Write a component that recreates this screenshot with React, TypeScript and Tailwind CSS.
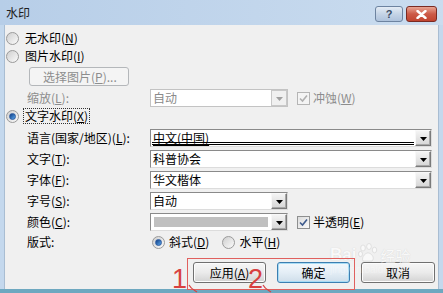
import React from "react";

function Radio({ checked }: { checked?: boolean }) {
  return (
    <span className="w-[13px] h-[13px] rounded-full border border-[#9a9a9a] bg-linear-to-br from-[#cfcfcf] to-[#fbfbfb] flex items-center justify-center shrink-0">
      {checked && (
        <span className="w-[7px] h-[7px] rounded-full bg-linear-to-br from-[#0f3d85] to-[#5ea9ec] border border-[#2b5aa0]" />
      )}
    </span>
  );
}

function Check({ disabled }: { disabled?: boolean }) {
  return (
    <span
      className={
        "w-[13px] h-[13px] border flex items-center justify-center shrink-0 " +
        (disabled
          ? "border-[#b5b5b5] bg-[#f4f4f4]"
          : "border-[#8e8f8f] bg-linear-to-br from-[#dcdcdc] to-[#fafafa]")
      }
    >
      <svg width="9" height="9" viewBox="0 0 9 9">
        <path
          d="M1 4.5 L3.5 7 L8 1.5"
          fill="none"
          stroke={disabled ? "#b0b0b0" : "#3d5a8c"}
          strokeWidth="1.6"
        />
      </svg>
    </span>
  );
}

function DropBtn({ disabled }: { disabled?: boolean }) {
  return (
    <span
      className={
        "w-[16px] h-[16px] shrink-0 flex items-center justify-center border " +
        (disabled
          ? "border-[#c8c8c8] bg-[#f0f0f0]"
          : "border-t-[#f8f8f8] border-l-[#f8f8f8] border-r-[#7a7a7a] border-b-[#7a7a7a] bg-linear-to-b from-[#f4f4f4] to-[#d6d6d6] shadow-[inset_-1px_-1px_0_#a8a8a8]")
      }
    >
      <svg width="7" height="4" viewBox="0 0 7 4" className="mt-[2px]">
        <path d="M0 0 H7 L3.5 4 Z" fill={disabled ? "#a0a0a0" : "#000"} />
      </svg>
    </span>
  );
}

function Combo({
  w,
  text,
  disabled,
  focused,
  swatch,
}: {
  w: string;
  text?: string;
  disabled?: boolean;
  focused?: boolean;
  swatch?: boolean;
}) {
  return (
    <div
      className={
        "h-[18px] flex items-stretch border bg-white " +
        w +
        (disabled
          ? " border-[#c3c3c3] text-[#8a8a8a]"
          : " border-t-[#8a8a8a] border-l-[#8a8a8a] border-r-[#dcdcdc] border-b-[#dcdcdc]")
      }
    >
      <div className="flex-1 flex items-center pl-[2px] relative">
        {swatch && <div className="absolute left-[3px] right-[3px] top-[3px] bottom-[3px] bg-[#c0c0c0]" />}
        {text && (
          <span className={"leading-none " + (focused ? "underline underline-offset-[2px]" : "")}>{text}</span>
        )}
        {focused && (
          <div className="absolute left-[1px] right-[1px] bottom-[1px] h-[3px] border-t border-b border-black" />
        )}
      </div>
      <div className="flex items-center">
        <DropBtn disabled={disabled} />
      </div>
    </div>
  );
}

function Label({ children }: { children: React.ReactNode }) {
  return <div className="w-[123px] ml-[21px] shrink-0 leading-none">{children}</div>;
}

function Btn({
  children,
  w,
  def,
}: {
  children: React.ReactNode;
  w: string;
  def?: boolean;
}) {
  return (
    <div
      className={
        "h-[21px] rounded-[3px] border flex items-center justify-center leading-none " +
        w +
        (def
          ? " border-[#3c7fb1] bg-linear-to-b from-[#f3f8fc] via-[#e4eef6] to-[#cfdeea] shadow-[inset_0_0_0_1px_#a8dcf5]"
          : " border-[#707070] bg-linear-to-b from-[#f6f6f6] via-[#ebebeb] to-[#d3d3d3] shadow-[inset_0_0_0_1px_#fcfcfc]")
      }
    >
      {children}
    </div>
  );
}

export default function App() {
  return (
    <div className="w-[443px] h-[293px] overflow-hidden relative bg-[#c4d8ed] flex flex-col font-['Noto_Sans_CJK_SC',sans-serif] text-[12px] text-black">
      {/* title bar */}
      <div className="h-[25px] shrink-0 flex items-center justify-between pl-[6px] pr-[6px] bg-linear-to-r from-[#b7cee8] to-[#cadcef]">
        <span className="text-[12px] leading-none text-[#1e1e1e]">水印</span>
        <div className="flex items-center gap-[3px] mt-[3px]">
          <div className="w-[28px] h-[16px] rounded-[3px] border border-[#6d83a0] bg-linear-to-b from-[#e4ecf5] via-[#c5d4e6] to-[#aec2dc] flex items-center justify-center">
            <span className="text-[11px] leading-none font-bold text-[#3c4e66] font-['Liberation_Sans',sans-serif]">?</span>
          </div>
          <div className="w-[31px] h-[16px] rounded-[3px] border border-[#7a2a22] bg-linear-to-b from-[#e8a493] via-[#cc5a47] to-[#c1442f] flex items-center justify-center">
            <svg width="11" height="9" viewBox="0 0 11 9">
              <path d="M1.5 1 L9.5 8 M9.5 1 L1.5 8" stroke="#fff" strokeWidth="2.4" strokeLinecap="round" />
            </svg>
          </div>
        </div>
      </div>

      {/* body */}
      <div className="flex-1 ml-[4px] mr-[4px] bg-[#f0f0f0] border-l border-r border-[#a9bdd2] flex flex-col pl-[1px]">
        <div className="h-[18px] mt-[4px] flex items-center gap-[6px]">
          <Radio />
          <span className="leading-none">无水印(<u>N</u>)</span>
        </div>
        <div className="h-[18px] flex items-center gap-[6px]">
          <Radio />
          <span className="leading-none">图片水印(<u>I</u>)</span>
        </div>
        <div className="h-[19px] mt-[2px] ml-[23px] w-[100px] rounded-[3px] border border-[#b4b7ba] bg-[#f4f4f4] flex items-center pl-[13px] text-[#8d8d8d] leading-none">
          选择图片(<u>P</u>)...
        </div>
        <div className="h-[18px] mt-[3px] flex items-center">
          <Label>
            <span className="text-[#8d8d8d]">缩放(<u>L</u>):</span>
          </Label>
          <Combo w="w-[138px]" text="自动" disabled />
          <div className="ml-[9px] flex items-center gap-[3px] text-[#8d8d8d]">
            <Check disabled />
            <span className="leading-none">冲蚀(<u>W</u>)</span>
          </div>
        </div>
        <div className="h-[18px] flex items-center gap-[6px]">
          <Radio checked />
          <span className="leading-none outline outline-1 outline-dotted outline-[#333] outline-offset-[1px]">
            文字水印(<u>X</u>)
          </span>
        </div>
        <div className="mt-[4px] flex flex-col gap-[3px]">
          <div className="flex items-center">
            <Label>
              语言(国家/地区)(<u>L</u>):
            </Label>
            <Combo w="w-[282px]" text="中文(中国)" focused />
          </div>
          <div className="flex items-center">
            <Label>
              文字(<u>T</u>):
            </Label>
            <Combo w="w-[282px]" text="科普协会" />
          </div>
          <div className="flex items-center">
            <Label>
              字体(<u>F</u>):
            </Label>
            <Combo w="w-[282px]" text="华文楷体" />
          </div>
          <div className="flex items-center">
            <Label>
              字号(<u>S</u>):
            </Label>
            <Combo w="w-[138px]" text="自动" />
          </div>
          <div className="flex items-center">
            <Label>
              颜色(<u>C</u>):
            </Label>
            <Combo w="w-[138px]" swatch />
            <div className="ml-[9px] flex items-center gap-[3px]">
              <Check />
              <span className="leading-none">半透明(<u>E</u>)</span>
            </div>
          </div>
        </div>
        <div className="h-[18px] mt-[2px] flex items-center">
          <Label>版式:</Label>
          <div className="ml-[2px] flex items-center gap-[4px]">
            <Radio checked />
            <span className="leading-none">斜式(<u>D</u>)</span>
          </div>
          <div className="ml-[13px] flex items-center gap-[4px]">
            <Radio />
            <span className="leading-none">水平(<u>H</u>)</span>
          </div>
        </div>
        <div className="mt-[11px] flex items-center pl-[187px] gap-[11px]">
          <Btn w="w-[73px]">
            应用(<u>A</u>)
          </Btn>
          <Btn w="w-[73px]" def>
            确定
          </Btn>
          <Btn w="w-[74px]">取消</Btn>
        </div>
      </div>
      <div className="h-[4px] shrink-0 bg-[#6ea8c0]" />

      {/* baidu watermark overlay */}
      <div className="absolute left-[330px] top-[243px] flex items-end gap-[2px] opacity-60 pointer-events-none">
        <span className="text-[17px] leading-none font-bold text-white font-['Liberation_Sans',sans-serif] [text-shadow:0_0_1px_#b8b8b8]">Bai</span>
        <svg width="20" height="20" viewBox="0 0 20 20">
          <g fill="#fff" stroke="#c0c0c0" strokeWidth="0.6">
            <ellipse cx="5" cy="5" rx="2.3" ry="3" />
            <ellipse cx="11" cy="3.5" rx="2.3" ry="3" />
            <ellipse cx="16.5" cy="7" rx="2.2" ry="2.8" />
            <ellipse cx="2.5" cy="11" rx="2" ry="2.6" />
            <path d="M5 18 C3 14 8 9 11 10 C14 11 17 15 14 18 Z" />
          </g>
        </svg>
        <span className="text-[15px] leading-none text-white [text-shadow:0_0_1px_#b8b8b8]">经验</span>
      </div>
      <div className="absolute left-[330px] top-[265px] text-[10px] leading-none text-white opacity-30 font-['Liberation_Sans',sans-serif] pointer-events-none">
        jingyan.baidu.com
      </div>

      {/* red annotation overlay */}
      <div className="absolute left-[187px] top-[258px] w-[168px] h-[32px] border border-[#e0605e] pointer-events-none" />
      <span className="absolute left-[172px] top-[266px] text-[27px] leading-none text-[#d8403f] font-['Liberation_Sans',sans-serif] pointer-events-none">
        1
      </span>
      <span className="absolute left-[248px] top-[266px] text-[27px] leading-none text-[#d8403f] font-['Liberation_Sans',sans-serif] pointer-events-none">
        2
      </span>
      <svg className="absolute left-[188px] top-[284px] pointer-events-none" width="10" height="9" viewBox="0 0 10 9">
        <path d="M1 1 C3 5 6 6 9 8" fill="none" stroke="#d8403f" strokeWidth="1.2" />
      </svg>
      <svg className="absolute left-[262px] top-[284px] pointer-events-none" width="10" height="9" viewBox="0 0 10 9">
        <path d="M1 1 C3 5 6 6 9 8" fill="none" stroke="#d8403f" strokeWidth="1.2" />
      </svg>
    </div>
  );
}
